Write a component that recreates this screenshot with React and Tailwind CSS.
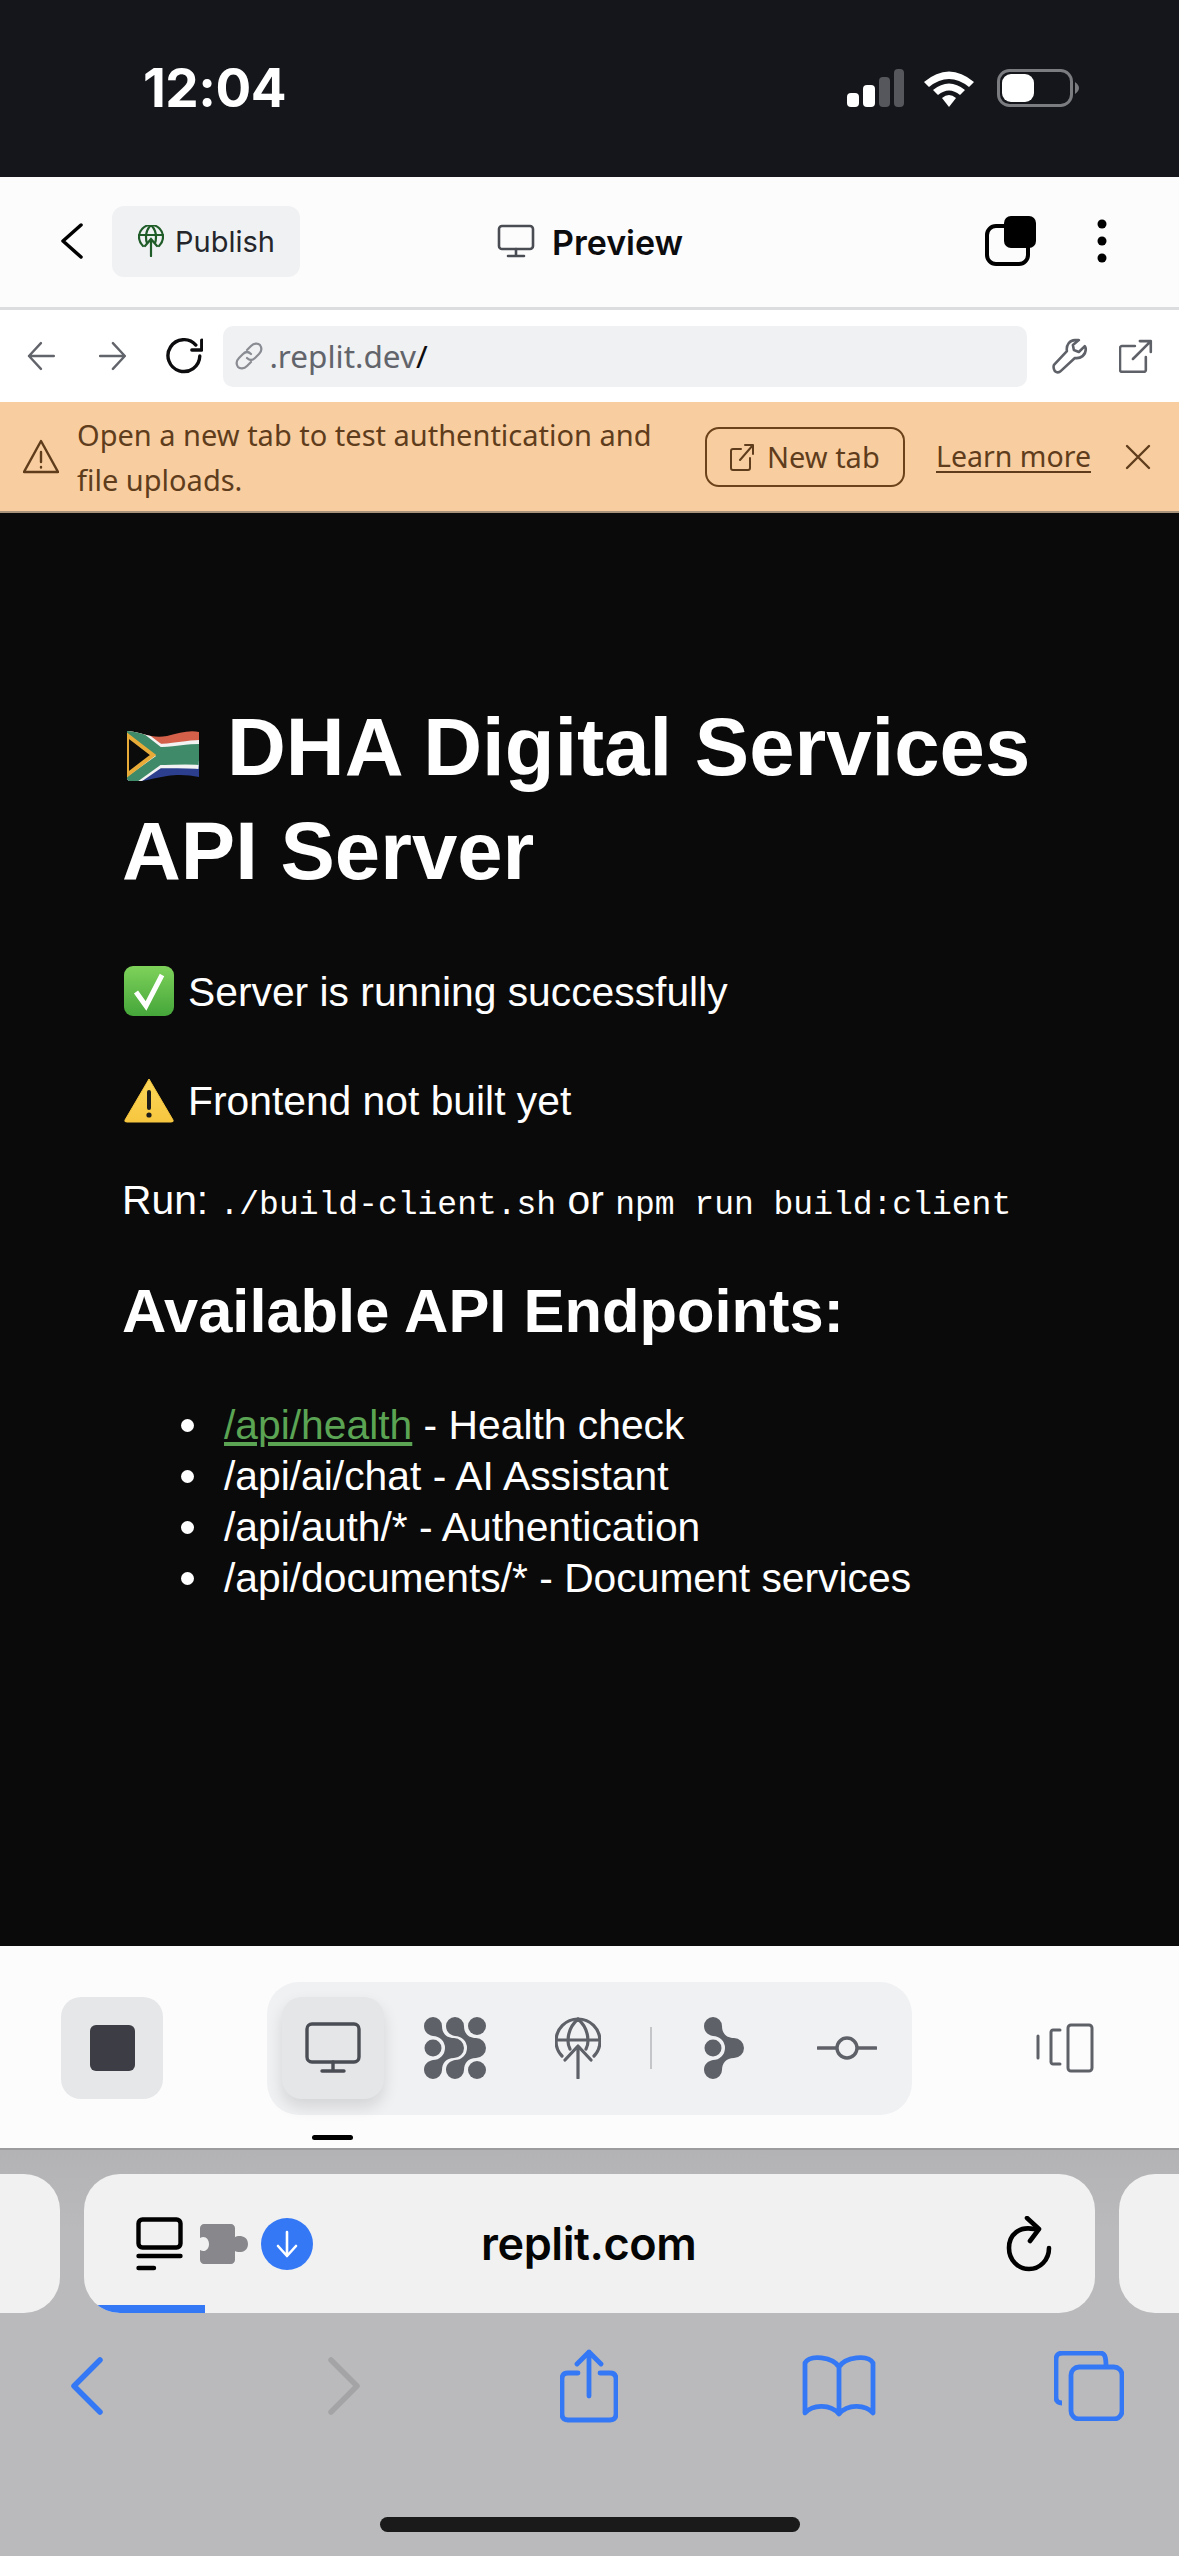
const mono = 'font-["Liberation_Mono",monospace]'
const NETWORK = 'M0 9A9 9 0 0 1 18 9C18 16 22 21 30 21A10 10 0 0 1 30 41C22 41 18 46 18 53A9 9 0 0 1 0 53C0 47 4 44 9 43A12 12 0 0 0 9 19C4 18 0 15 0 9Z'

function Flag() {
  return (
    <svg viewBox="0 0 72 52" className="ml-[5px] mr-[28px] inline-block h-[52px] w-[72px] align-[-6px]">
      <defs>
        <clipPath id="wave">
          <path d="M0 2C16 3 24 10 40 7C52 4 62 1 72 3V48C62 46 52 45 40 47C26 49 14 54 2 52L0 50Z" />
        </clipPath>
      </defs>
      <g clipPath="url(#wave)">
        <rect width="72" height="26" fill="#d4604a" />
        <rect y="26" width="72" height="28" fill="#2b3f8e" />
        <path d="M0 -2L32 22C45 22 60 18 72 18M0 54L32 32C45 32 60 32 72 33" fill="none" stroke="#f2f2f2" strokeWidth="14" />
        <path d="M0 -2L32 23C45 23 60 20 72 20M0 54L32 31C45 31 60 30 72 31" fill="none" stroke="#3f8a68" strokeWidth="10" />
        <path d="M32 27H72" stroke="#3f8a68" strokeWidth="10" />
        <path d="M0 6L26 26L0 46Z" fill="#0b0b0b" stroke="#e8ab37" strokeWidth="4" />
      </g>
    </svg>
  )
}

function CheckEmoji() {
  return (
    <svg viewBox="0 0 50 50" className="ml-[2px] mr-[14px] inline-block h-[50px] w-[50px] align-[-10px]">
      <defs>
        <linearGradient id="gg" x1="0" y1="0" x2="0" y2="1">
          <stop offset="0" stopColor="#7ed25a" />
          <stop offset="1" stopColor="#45a63a" />
        </linearGradient>
      </defs>
      <rect width="50" height="50" rx="9" fill="url(#gg)" />
      <path d="M12 26L22 40L38 9" fill="none" stroke="#fff" strokeWidth="5" />
    </svg>
  )
}

function WarnEmoji() {
  return (
    <svg viewBox="0 0 50 46" className="ml-[2px] mr-[14px] inline-block h-[46px] w-[50px] align-[-8px]">
      <defs>
        <linearGradient id="yy" x1="0" y1="0" x2="0" y2="1">
          <stop offset="0" stopColor="#fbd75a" />
          <stop offset="1" stopColor="#f7c63f" />
        </linearGradient>
      </defs>
      <path d="M25 2L49 43Q50 45 47 45H3Q0 45 1 43Z" fill="url(#yy)" stroke="#f7c63f" strokeLinejoin="round" />
      <path d="M25 15V31" stroke="#1c1c1c" strokeWidth="4" strokeLinecap="round" />
      <circle cx="25" cy="38" r="2.6" fill="#1c1c1c" />
    </svg>
  )
}

function StatusBar() {
  return (
    <div className="flex h-[177px] shrink-0 items-start justify-between bg-[#14161b] pl-[143px] pr-[99px] pt-[58px]">
      <span className='font-["Inter",sans-serif] text-[53px] font-bold leading-[60px] tracking-[-0.5px] text-white'>12:04</span>
      <svg viewBox="0 0 236 38" className="mt-[11px] h-[38px] w-[236px]">
        <rect x="3" y="24" width="12" height="14" rx="4" fill="#fff" />
        <rect x="19" y="16" width="12" height="22" rx="4" fill="#fff" />
        <rect x="35" y="8" width="11" height="30" rx="4" fill="#55575c" />
        <rect x="50" y="0" width="10" height="38" rx="4" fill="#55575c" />
        <path d="M80 13Q105 -8 130 13L125 18Q105 2 85 18Z" fill="#fff" />
        <path d="M89 21Q105 8 121 21L116 26Q105 17 94 26Z" fill="#fff" />
        <path d="M98 29Q105 23 112 29L105 38Z" fill="#fff" />
        <rect x="154.5" y="1.5" width="73" height="35" rx="11" fill="none" stroke="#7a7c80" strokeWidth="3" />
        <rect x="158" y="5" width="32" height="28" rx="9" fill="#fff" />
        <path d="M231 13Q235 16 235 19Q235 22 231 25Z" fill="#7a7c80" />
      </svg>
    </div>
  )
}

function Header() {
  return (
    <div className="flex h-[133px] shrink-0 items-center border-b-[3px] border-[#dcdddf] bg-[#fcfcfc] pb-[2px] pl-[60px] pr-[72px]">
      <svg viewBox="0 0 24 36" className="h-[36px] w-[24px] text-black" fill="none" stroke="currentColor" strokeWidth="3.5" strokeLinecap="round" strokeLinejoin="round">
        <path d="M21 2L3 18L21 34" />
      </svg>
      <div className="ml-[28px] flex h-[71px] w-[188px] items-center rounded-[12px] bg-[#f0f1f3] pl-[26px]">
        <svg viewBox="0 0 26 32" className="h-[32px] w-[26px]" fill="none" stroke="#1f5c28" strokeWidth="2.2" strokeLinecap="round">
          <path d="M5 21C2 18 1 15 1 12A12 12 0 0 1 25 12C25 15 24 18 21 21" />
          <path d="M13 0C9 4 8 8 8 12C8 14 8 16 9 18M13 0C17 4 18 8 18 12C18 14 18 16 17 18M1 10H25" />
          <path d="M13 31V14M7 21L13 14L19 21" />
        </svg>
        <span className='ml-[11px] pt-[2px] font-["Inter",sans-serif] text-[29px] text-[#24262b]'>Publish</span>
      </div>
      <div className="ml-[197px] flex items-center">
        <svg viewBox="0 0 38 34" className="h-[34px] w-[38px]" fill="none" stroke="#4a4c53" strokeWidth="2.6" strokeLinecap="round" strokeLinejoin="round">
          <rect x="2" y="2" width="34" height="23" rx="3" />
          <path d="M19 25V32M11 32H27" />
        </svg>
        <span className='ml-[17px] pt-[2px] font-["Inter",sans-serif] text-[34px] font-semibold text-[#0c0c0f]'>Preview</span>
      </div>
      <svg viewBox="0 0 52 50" className="ml-auto h-[50px] w-[52px]">
        <rect x="2" y="10" width="41" height="38" rx="9" fill="none" stroke="#000" strokeWidth="4" />
        <rect x="19" y="0" width="32" height="32" rx="7" fill="#000" />
      </svg>
      <svg viewBox="0 0 10 46" className="ml-[60px] h-[46px] w-[10px]">
        <circle cx="5" cy="6" r="4.5" fill="#000" />
        <circle cx="5" cy="23" r="4.5" fill="#000" />
        <circle cx="5" cy="40" r="4.5" fill="#000" />
      </svg>
    </div>
  )
}

function UrlBar() {
  return (
    <div className="flex h-[92px] shrink-0 items-center bg-white pl-[27px] pr-[26px]">
      <svg viewBox="0 0 28 30" className="h-[30px] w-[28px]" fill="none" stroke="#62646b" strokeWidth="2.4" strokeLinecap="round" strokeLinejoin="round">
        <path d="M27 15H2M14 2L2 15L14 28" />
      </svg>
      <svg viewBox="0 0 28 30" className="ml-[44px] h-[30px] w-[28px]" fill="none" stroke="#62646b" strokeWidth="2.4" strokeLinecap="round" strokeLinejoin="round">
        <path d="M1 15H26M14 2L26 15L14 28" />
      </svg>
      <svg viewBox="0 0 38 36" className="ml-[39px] h-[36px] w-[38px]" fill="none" stroke="#0c0c0f" strokeWidth="3.4" strokeLinecap="round" strokeLinejoin="round">
        <path d="M34 18A16 16 0 1 1 30 7" />
        <path d="M36 2V12H26" />
      </svg>
      <div className="ml-[20px] flex h-[61px] w-[809px] items-center rounded-[10px] bg-[#f0f1f3] pl-[12px]">
        <svg viewBox="0 0 28 28" className="h-[28px] w-[28px]" fill="none" stroke="#8a8c93" strokeWidth="2.2" strokeLinecap="round">
          <path d="M12 8L16 4C19 1 23 1 25 3C27 6 27 9 24 12L20 16C17 19 14 18 12 16" />
          <path d="M16 12C14 10 11 9 8 12L4 16C1 19 1 22 3 25C5 27 9 27 12 24L16 20" />
        </svg>
        <span className='ml-[6px] font-["Noto_Sans",sans-serif] text-[31.5px] text-[#62646b]'>.replit.dev<span className="text-[#0c0c0f]">/</span></span>
      </div>
      <svg viewBox="0 0 36 36" className="ml-[25px] h-[36px] w-[36px]" fill="none" stroke="#5f6169" strokeWidth="2.6" strokeLinecap="round" strokeLinejoin="round">
        <path d="M23 2C18 2 14 7 15 13L2 27C1 29 2 33 4 34C6 35 8 34 9 33L23 20C29 21 34 17 34 11C34 10 34 9 33 8L27 14L22 12L21 7L27 2C26 2 24 2 23 2Z" />
      </svg>
      <svg viewBox="0 0 34 34" className="ml-[31px] h-[34px] w-[34px]" fill="none" stroke="#5f6169" strokeWidth="2.6" strokeLinecap="round" strokeLinejoin="round">
        <path d="M16 7H3C2 7 1 8 1 9V31C1 32 2 33 3 33H25C26 33 27 32 27 31V18" />
        <path d="M14 20L32 2M21 2H32V13" />
      </svg>
    </div>
  )
}

function Banner() {
  return (
    <div className='flex h-[111px] shrink-0 items-center border-b-[2px] border-[#a8947c] bg-[#f8cea0] pl-[23px] font-["Noto_Sans",sans-serif] text-[#5f3d1c]'>
      <svg viewBox="0 0 36 36" className="h-[36px] w-[36px] shrink-0" fill="none" stroke="currentColor" strokeWidth="2.4" strokeLinecap="round" strokeLinejoin="round">
        <path d="M18 2L35 33H1Z" />
        <path d="M18 13V23M18 28V28.5" />
      </svg>
      <p className="ml-[18px] w-[600px] shrink-0 text-[29px] leading-[45px]">Open a new tab to test authentication and file uploads.</p>
      <div className="ml-[28px] flex h-[60px] w-[200px] shrink-0 items-center rounded-[14px] border-[2.5px] border-[#6b421a] pl-[23px]">
        <svg viewBox="0 0 24 28" className="h-[28px] w-[24px]" fill="none" stroke="currentColor" strokeWidth="2" strokeLinecap="round" strokeLinejoin="round">
          <path d="M11 6H3C2 6 1 7 1 8V25C1 26 2 27 3 27H18C19 27 20 26 20 25V15" />
          <path d="M10 17L23 2M15 2H23V11" />
        </svg>
        <span className="ml-[13px] text-[29px]">New tab</span>
      </div>
      <span className="ml-[31px] text-[28.5px] underline underline-offset-4">Learn more</span>
      <svg viewBox="0 0 26 26" className="ml-[34px] h-[26px] w-[26px]" fill="none" stroke="currentColor" strokeWidth="2.4" strokeLinecap="round">
        <path d="M2 2L24 24M24 2L2 24" />
      </svg>
    </div>
  )
}

function Bullet({ children }) {
  return (
    <li className="flex items-center">
      <span className="ml-[59px] mr-[30px] h-[13px] w-[13px] rounded-full bg-white" />
      <span>{children}</span>
    </li>
  )
}

function Content() {
  return (
    <div className='h-[1433px] shrink-0 bg-[#0a0a0a] px-[122px] pt-[182px] font-["Liberation_Sans",sans-serif] text-[40.8px] leading-[51px] text-white'>
      <h1 className="text-[81.5px] font-bold leading-[104px]">
        <Flag />
        DHA Digital Services API Server
      </h1>
      <p className="mt-[63px] h-[51px]">
        <CheckEmoji />
        Server is running successfully
      </p>
      <p className="mt-[59px] h-[51px]">
        <WarnEmoji />
        Frontend not built yet
      </p>
      <p className="mt-[48px] h-[51px] whitespace-nowrap">
        Run: <code className={mono + ' text-[33px]'}>./build-client.sh</code> or <code className={mono + ' text-[33px]'}>npm run build:client</code>
      </p>
      <h2 className="mt-[46px] text-[61.4px] font-bold leading-[78px]">Available API Endpoints:</h2>
      <ul className="mt-[50px] list-none">
        <Bullet>
          <a className="text-[#5aa454] underline">/api/health</a> - Health check
        </Bullet>
        <Bullet>/api/ai/chat - AI Assistant</Bullet>
        <Bullet>/api/auth/* - Authentication</Bullet>
        <Bullet>/api/documents/* - Document services</Bullet>
      </ul>
    </div>
  )
}

function Toolbar() {
  return (
    <div className="relative flex h-[204px] shrink-0 items-center border-b-[2px] border-[#9c9c9e] bg-[#fcfcfc] pt-[2px] pl-[61px]">
      <div className="flex h-[102px] w-[102px] items-center justify-center rounded-[20px] bg-[#e6e7e9]">
        <div className="h-[46px] w-[45px] rounded-[6px] bg-[#3d3e45]" />
      </div>
      <div className="ml-[104px] flex h-[133px] w-[645px] items-center rounded-[32px] bg-[#f0f1f3] pl-[15px]">
        <div className="flex h-[102px] w-[102px] items-center justify-center rounded-[20px] bg-[#e5e6e8] shadow-[0_8px_16px_rgba(0,0,0,0.12)]">
          <svg viewBox="0 0 56 52" className="h-[52px] w-[56px]" fill="none" stroke="#4b4d55" strokeWidth="3.4" strokeLinecap="round" strokeLinejoin="round">
            <rect x="2" y="2" width="52" height="38" rx="5" />
            <path d="M28 40V49M17 49H39" />
          </svg>
        </div>
        <svg viewBox="0 0 62 62" className="ml-[40px] h-[62px] w-[62px]" fill="#5f6169">
          <path d={NETWORK} />
          <path d={NETWORK} transform="translate(22 0)" />
          <circle cx="9" cy="31" r="8.5" />
          <circle cx="53" cy="9" r="9" />
          <circle cx="53" cy="53" r="9" />
        </svg>
        <svg viewBox="0 0 46 62" className="ml-[69px] h-[62px] w-[46px]" fill="none" stroke="#5f6169" strokeWidth="3.2" strokeLinecap="round" strokeLinejoin="round">
          <path d="M7 39C2 34 1 28 1 24A22 22 0 0 1 45 24C45 28 44 34 39 39" />
          <path d="M23 2C15 9 13 16 13 24C13 27 14 30 15 32M23 2C31 9 33 16 33 24C33 27 32 30 31 32M1 23H45" />
          <path d="M23 61V29M10 43L23 29L36 43" />
        </svg>
        <div className="ml-[49px] h-[42px] w-[2px] bg-[#c4c5c9]" />
        <svg viewBox="0 0 40 62" className="ml-[52px] h-[62px] w-[40px]" fill="#5f6169">
          <path d={NETWORK} />
          <circle cx="9" cy="31" r="8.5" />
        </svg>
        <svg viewBox="0 0 60 26" className="ml-[73px] h-[26px] w-[60px]" fill="none" stroke="#5f6169" strokeWidth="3.4" strokeLinecap="round">
          <circle cx="30" cy="13" r="10" />
          <path d="M1 13H19M41 13H59" />
        </svg>
      </div>
      <svg viewBox="0 0 58 50" className="ml-[124px] h-[50px] w-[58px]" fill="none" stroke="#5f6169" strokeWidth="3" strokeLinecap="round" strokeLinejoin="round">
        <rect x="32" y="2" width="24" height="46" rx="3" />
        <path d="M24 7H17C16 7 15 8 15 9V39C15 40 16 41 17 41H24M2 13V35" />
      </svg>
      <div className="absolute bottom-[8px] left-[312px] h-[5px] w-[41px] rounded-full bg-black" />
    </div>
  )
}

function TabCard() {
  return (
    <div className="relative flex h-[139px] w-[1011px] shrink-0 items-center overflow-hidden rounded-[36px] bg-[#f1f1f1] pl-[52px] pr-[43px]">
      <svg viewBox="0 0 47 54" className="h-[54px] w-[47px]" fill="none" stroke="#000" strokeWidth="4.4" strokeLinecap="round" strokeLinejoin="round">
        <rect x="2.5" y="2.5" width="42" height="28" rx="4" />
        <path d="M2.5 39H44.5M2.5 51H18" />
      </svg>
      <svg viewBox="0 0 48 40" className="ml-[17px] h-[40px] w-[48px]" fill="#87878c">
        <path d="M4 0H31C33 0 35 2 35 4V13C38 11 48 11 48 20C48 29 38 29 35 27V36C35 38 33 40 31 40H4C2 40 0 38 0 36V26C5 29 9 25 9 20C9 15 5 11 0 14V4C0 2 2 0 4 0Z" />
      </svg>
      <div className="ml-[13px] flex h-[52px] w-[52px] items-center justify-center rounded-full bg-[#3478f6]">
        <svg viewBox="0 0 24 28" className="h-[28px] w-[24px]" fill="none" stroke="#fff" strokeWidth="2.6" strokeLinecap="round" strokeLinejoin="round">
          <path d="M12 2V25M3 16L12 26L21 16" />
        </svg>
      </div>
      <span className='absolute left-[397px] font-["Inter",sans-serif] text-[45px] font-semibold leading-[52px] tracking-[-0.4px] text-[#050505]'>replit.com</span>
      <svg viewBox="0 0 46 56" className="ml-auto h-[56px] w-[46px]" fill="none" stroke="#000" strokeWidth="4.6" strokeLinecap="round" strokeLinejoin="round">
        <path d="M28 13C14 10 3 18 3 32C3 44 12 53 23 53C34 53 43 44 43 32" />
        <path d="M21 2L33 13L24 25" />
      </svg>
      <div className="absolute bottom-0 left-0 h-[8px] w-[121px] bg-[#3478f6]" />
    </div>
  )
}

function SafariBar() {
  return (
    <div className="flex min-h-0 flex-1 flex-col bg-gradient-to-b from-[#b3b3b5] to-[#bababc] to-[20%] pt-[24px]">
      <div className="flex h-[139px] shrink-0 items-center gap-[24px]">
        <div className="h-[139px] w-[60px] shrink-0 rounded-r-[36px] bg-[#f1f1f1]" />
        <TabCard />
        <div className="h-[139px] w-[60px] shrink-0 rounded-l-[36px] bg-[#f1f1f1]" />
      </div>
      <div className="mt-[36px] flex h-[74px] shrink-0 items-center pl-[70px]">
        <svg viewBox="0 0 34 58" className="h-[58px] w-[34px]" fill="none" stroke="#3478f6" strokeWidth="5.5" strokeLinecap="round" strokeLinejoin="round">
          <path d="M30 3L4 29L30 55" />
        </svg>
        <svg viewBox="0 0 34 58" className="ml-[223px] h-[58px] w-[34px]" fill="none" stroke="#a4a4a6" strokeWidth="5.5" strokeLinecap="round" strokeLinejoin="round">
          <path d="M4 3L30 29L4 55" />
        </svg>
        <svg viewBox="0 0 58 74" className="ml-[199px] h-[74px] w-[58px]" fill="none" stroke="#3478f6" strokeWidth="4.8" strokeLinecap="round" strokeLinejoin="round">
          <path d="M18 24H8C4 24 2 26 2 30V65C2 69 4 71 8 71H50C54 71 56 69 56 65V30C56 26 54 24 50 24H40" />
          <path d="M29 47V3M17 15L29 3L41 15" />
        </svg>
        <svg viewBox="0 0 74 62" className="ml-[184px] h-[62px] w-[74px]" fill="none" stroke="#3478f6" strokeWidth="4.8" strokeLinecap="round" strokeLinejoin="round">
          <path d="M37 12C31 2 8 -1 3 8V58C10 50 28 48 37 59C46 48 64 50 71 58V8C66 -1 43 2 37 12ZM37 12V58" />
        </svg>
        <svg viewBox="0 0 70 70" className="ml-[178px] h-[70px] w-[70px]" fill="none" stroke="#3478f6" strokeWidth="4.8" strokeLinejoin="round">
          <path d="M8 52C4 52 2 50 2 46V9C2 4 4 2 9 2H46C50 2 52 4 52 15" />
          <rect x="17" y="16" width="51" height="52" rx="8" />
        </svg>
      </div>
      <div className="mx-auto mt-[94px] h-[15px] w-[420px] rounded-full bg-[#1a1a1a]" />
    </div>
  )
}

export default function App() {
  return (
    <div className="flex h-[2556px] w-[1179px] flex-col overflow-hidden">
      <StatusBar />
      <Header />
      <UrlBar />
      <Banner />
      <Content />
      <Toolbar />
      <SafariBar />
    </div>
  )
}
